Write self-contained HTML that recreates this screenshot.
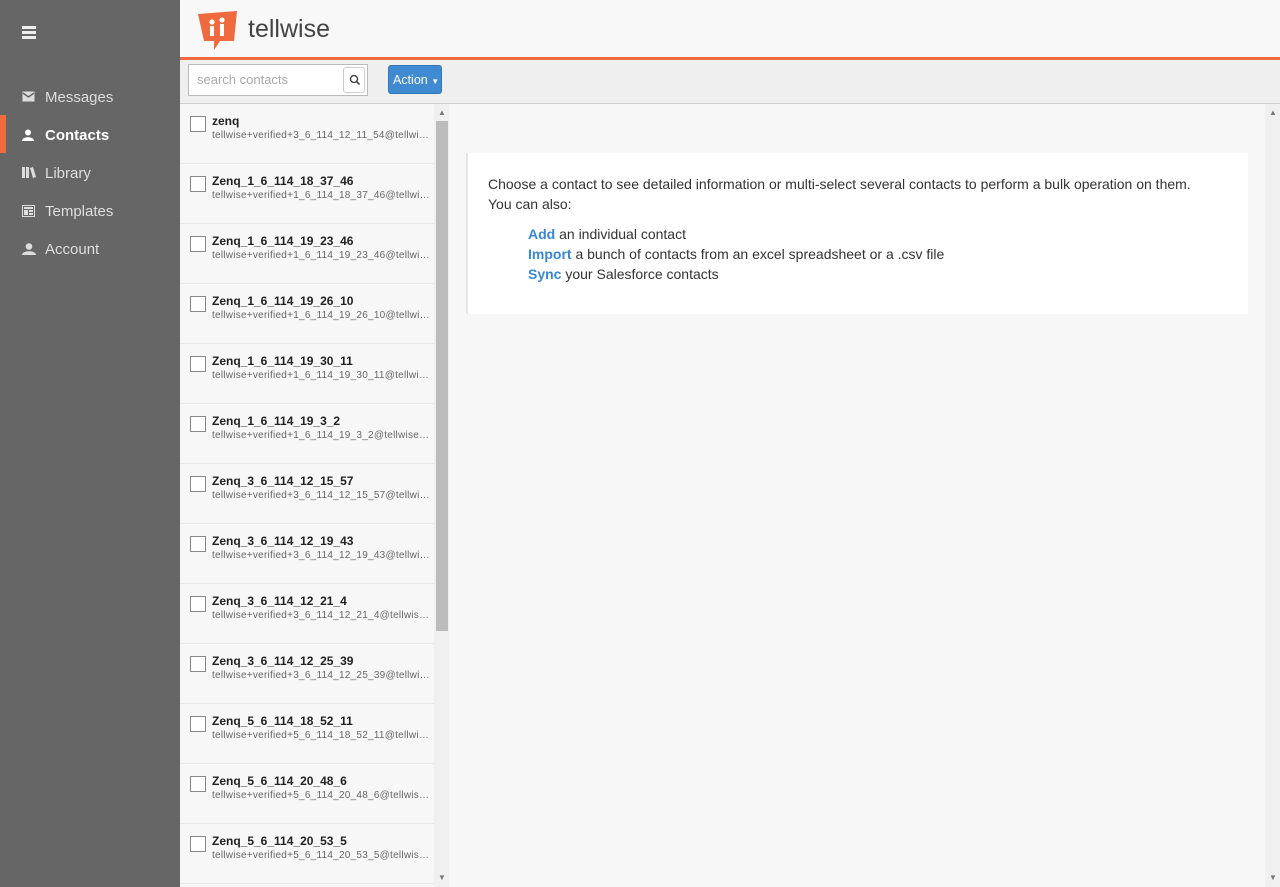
<!DOCTYPE html>
<html><head><meta charset="utf-8"><style>
*{box-sizing:border-box;margin:0;padding:0}
body{width:1280px;height:887px;overflow:hidden;font-family:"Liberation Sans",Arial,sans-serif;background:#f7f7f7;position:relative}
.side{position:absolute;left:0;top:0;width:180px;height:887px;background:#666}
.ham{position:absolute;left:22px;top:26px;width:14px}
.ham i{display:block;height:3px;background:#eee;margin-bottom:2px}
.nav{position:absolute;left:0;width:180px;height:38px;color:#ddd;font-size:15px;line-height:42px;padding-left:45px}
.nav.act{color:#fff;font-weight:bold}
.nav.act:before{content:"";position:absolute;left:0;top:0;width:6px;height:38px;background:#ef6a3f}
.nav svg{position:absolute;left:22px;top:14px}
.hdr{position:absolute;left:180px;top:0;width:1100px;height:60px;background:#f8f8f8;border-bottom:3px solid #ef6a3f}
.logo{position:absolute;left:17px;top:11px}
.brand{position:absolute;left:68px;top:15px;font-size:25px;color:#444}
.tb{position:absolute;left:180px;top:60px;width:1100px;height:44px;background:#efefef;border-bottom:1px solid #ccc}
.search{position:absolute;left:8px;top:4px;width:180px;height:32px;border:1px solid #bbb;background:#fff;font-size:13px;color:#aaa;padding:7px 8px}
.sbtn{position:absolute;right:2px;top:2px;width:22px;height:26px;border:1px solid #ccc;border-radius:3px;background:#fff}
.abtn{position:absolute;left:208px;top:5px;width:54px;height:29px;background:#3f8ad0;border-radius:3px;color:#fff;font-size:12.5px;line-height:28px;padding-left:4px;border:1px solid #3578b8;white-space:nowrap}
.list{position:absolute;left:180px;top:104px;width:254px;height:783px;background:#f7f7f7}
.row{height:60px;border-bottom:1px solid #e8e8e8;position:relative}
.cb{position:absolute;left:10px;top:12px;width:16px;height:16px;border:1px solid #888;background:#fff}
.nm{position:absolute;left:32px;top:10px;font-size:12px;font-weight:bold;color:#222}
.em{position:absolute;left:32px;top:26px;font-size:10px;color:#666;white-space:nowrap;width:220px;overflow:hidden;text-overflow:ellipsis;letter-spacing:0.25px}
.sc1{position:absolute;left:434px;top:104px;width:15px;height:783px;background:#f0f0f0}
.th1{position:absolute;left:436px;top:121px;width:12px;height:510px;background:#bcbcbc}
.sc2{position:absolute;left:1265px;top:104px;width:15px;height:783px;background:#f0f0f0}
.card{position:absolute;left:466px;top:153px;width:782px;height:161px;background:#fff;border-left:2px solid #e6e6e6;padding:21px 20px;font-size:14px;color:#333;line-height:20px}
.card a{color:#3a87cf;font-weight:bold;text-decoration:none}
.ind{padding-left:40px;margin-top:10px}
.arr{position:absolute;font-size:8px;color:#777}
</style></head><body>
<div class="side">
<div class="ham"><i></i><i></i><i></i></div>
<div class="nav" style="top:77px"><svg width="13" height="11"><rect x="0.5" y="0.5" width="12" height="10" fill="#ddd"/><path d="M1 2l5.5 4 5.5-4" stroke="#666" stroke-width="1.5" fill="none"/></svg>Messages</div>
<div class="nav act" style="top:115px"><svg width="14" height="12"><circle cx="6" cy="3.5" r="3" fill="#fff"/><path d="M0 12c0-5 12-5 12 0z" fill="#fff"/></svg>Contacts</div>
<div class="nav" style="top:153px"><svg width="14" height="11"><rect x="0" y="0" width="3" height="11" fill="#ddd"/><rect x="4" y="0" width="3" height="11" fill="#ddd"/><path d="M8 1l3-1 3 10-3 1z" fill="#ddd"/></svg>Library</div>
<div class="nav" style="top:191px"><svg width="13" height="12"><rect x="0.5" y="0.5" width="12" height="11" fill="none" stroke="#ddd"/><rect x="2" y="2" width="9" height="2" fill="#ddd"/><rect x="2" y="5" width="4" height="5" fill="#ddd"/><rect x="7" y="5" width="4" height="2" fill="#ddd"/><rect x="7" y="8" width="4" height="2" fill="#ddd"/></svg>Templates</div>
<div class="nav" style="top:229px"><svg width="14" height="12"><circle cx="7" cy="3.5" r="3.3" fill="#ddd"/><path d="M0 12c0-5 14-5 14 0z" fill="#ddd"/></svg>Account</div>
</div>
<div class="hdr">
<svg class="logo" width="42" height="40" viewBox="0 0 42 40"><path d="M1 3l39-3-3 30H23l-6 9v-9H7z" fill="#ef6a3f"/><circle cx="15" cy="11" r="2.6" fill="#fff"/><circle cx="25" cy="9" r="2.6" fill="#fff"/><path d="M13 15h4v10h-4zM23 13h4v12h-4z" fill="#fff"/></svg>
<div class="brand">tellwise</div>
</div>
<div class="tb">
<div class="search">search contacts<div class="sbtn"><svg width="20" height="24"><circle cx="10" cy="11" r="3.5" stroke="#333" stroke-width="1.3" fill="none"/><path d="M12.5 13.5l3 3" stroke="#333" stroke-width="1.5"/></svg></div></div>
<div class="abtn">Action <span style="font-size:8px">▼</span></div>
</div>
<div class="list">
<div class="row"><div class="cb"></div><div class="nm">zenq</div><div class="em">tellwise+verified+3_6_114_12_11_54@tellwise.com</div></div>
<div class="row"><div class="cb"></div><div class="nm">Zenq_1_6_114_18_37_46</div><div class="em">tellwise+verified+1_6_114_18_37_46@tellwise.com</div></div>
<div class="row"><div class="cb"></div><div class="nm">Zenq_1_6_114_19_23_46</div><div class="em">tellwise+verified+1_6_114_19_23_46@tellwise.com</div></div>
<div class="row"><div class="cb"></div><div class="nm">Zenq_1_6_114_19_26_10</div><div class="em">tellwise+verified+1_6_114_19_26_10@tellwise.com</div></div>
<div class="row"><div class="cb"></div><div class="nm">Zenq_1_6_114_19_30_11</div><div class="em">tellwise+verified+1_6_114_19_30_11@tellwise.com</div></div>
<div class="row"><div class="cb"></div><div class="nm">Zenq_1_6_114_19_3_2</div><div class="em">tellwise+verified+1_6_114_19_3_2@tellwise.com</div></div>
<div class="row"><div class="cb"></div><div class="nm">Zenq_3_6_114_12_15_57</div><div class="em">tellwise+verified+3_6_114_12_15_57@tellwise.com</div></div>
<div class="row"><div class="cb"></div><div class="nm">Zenq_3_6_114_12_19_43</div><div class="em">tellwise+verified+3_6_114_12_19_43@tellwise.com</div></div>
<div class="row"><div class="cb"></div><div class="nm">Zenq_3_6_114_12_21_4</div><div class="em">tellwise+verified+3_6_114_12_21_4@tellwise.com</div></div>
<div class="row"><div class="cb"></div><div class="nm">Zenq_3_6_114_12_25_39</div><div class="em">tellwise+verified+3_6_114_12_25_39@tellwise.com</div></div>
<div class="row"><div class="cb"></div><div class="nm">Zenq_5_6_114_18_52_11</div><div class="em">tellwise+verified+5_6_114_18_52_11@tellwise.com</div></div>
<div class="row"><div class="cb"></div><div class="nm">Zenq_5_6_114_20_48_6</div><div class="em">tellwise+verified+5_6_114_20_48_6@tellwise.com</div></div>
<div class="row"><div class="cb"></div><div class="nm">Zenq_5_6_114_20_53_5</div><div class="em">tellwise+verified+5_6_114_20_53_5@tellwise.com</div></div>
</div>
<div class="sc1"></div><div class="th1"></div>
<div class="arr" style="left:438px;top:108px">▲</div><div class="arr" style="left:438px;top:873px">▼</div>
<div class="sc2"></div>
<div class="arr" style="left:1269px;top:108px">▲</div><div class="arr" style="left:1269px;top:873px">▼</div>
<div class="card">Choose a contact to see detailed information or multi-select several contacts to perform a bulk operation on them.<br>You can also:
<div class="ind"><a>Add</a> an individual contact<br><a>Import</a> a bunch of contacts from an excel spreadsheet or a .csv file<br><a>Sync</a> your Salesforce contacts</div></div>
</body></html>
